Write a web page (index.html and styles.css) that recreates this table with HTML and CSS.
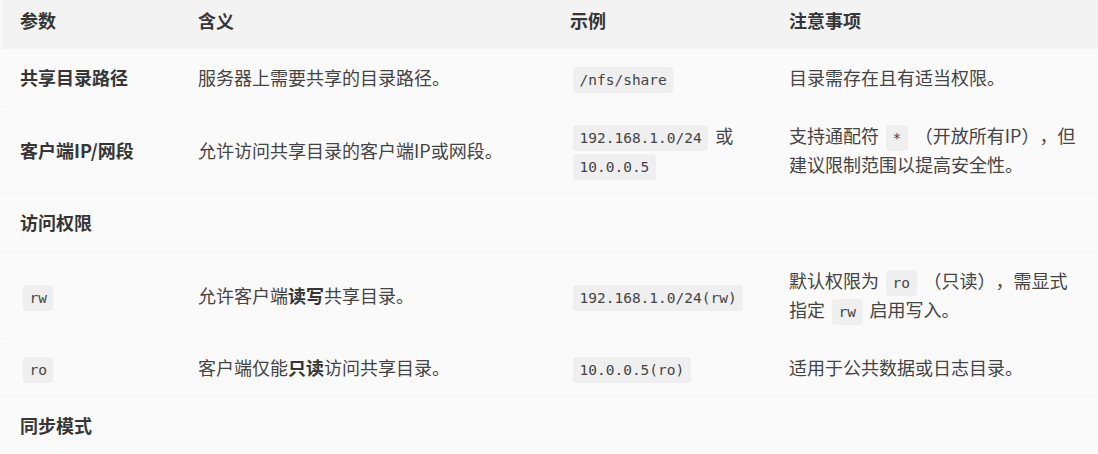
FILE: index.html
```html
<!DOCTYPE html>
<html lang="zh-CN">
<head>
<meta charset="utf-8">
<title>NFS 导出参数</title>
<link rel="stylesheet" href="styles.css">
</head>
<body>
<div class="viewport">
  <table class="params">
    <colgroup>
      <col class="c-param">
      <col class="c-desc">
      <col class="c-example">
      <col class="c-note">
    </colgroup>
    <thead>
      <tr>
        <th>参数</th>
        <th>含义</th>
        <th>示例</th>
        <th>注意事项</th>
      </tr>
    </thead>
    <tbody>
      <tr>
        <td class="name">共享目录路径</td>
        <td>服务器上需要共享的目录路径。</td>
        <td><code>/nfs/share</code></td>
        <td>目录需存在且有适当权限。</td>
      </tr>
      <tr>
        <td class="name">客户端IP/网段</td>
        <td>允许访问共享目录的客户端IP或网段。</td>
        <td><code>192.168.1.0/24</code> 或 <code>10.0.0.5</code></td>
        <td>支持通配符 <code>*</code> （开放所有IP），但建议限制范围以提高安全性。</td>
      </tr>
      <tr>
        <td class="name">访问权限</td>
        <td></td>
        <td></td>
        <td></td>
      </tr>
      <tr>
        <td><code>rw</code></td>
        <td>允许客户端<strong>读写</strong>共享目录。</td>
        <td><code>192.168.1.0/24(rw)</code></td>
        <td>默认权限为 <code>ro</code> （只读），需显式指定 <code>rw</code> 启用写入。</td>
      </tr>
      <tr>
        <td><code>ro</code></td>
        <td>客户端仅能<strong>只读</strong>访问共享目录。</td>
        <td><code>10.0.0.5(ro)</code></td>
        <td>适用于公共数据或日志目录。</td>
      </tr>
      <tr>
        <td class="name">同步模式</td>
        <td></td>
        <td></td>
        <td></td>
      </tr>
    </tbody>
  </table>
</div>
</body>
</html>
```

FILE: styles.css
```css
html, body {
  margin: 0;
  padding: 0;
  background: #fafafa;
}

body {
  font-family: "Noto Sans CJK SC", "Noto Sans", sans-serif;
  font-size: 18px;
  color: #444444;
  text-spacing-trim: space-all;
}

.viewport {
  width: 1098px;
  height: 454px;
  overflow: hidden;
}

.params {
  margin: -8px 0 0 2px;
  width: 1096px;
  table-layout: fixed;
  border-collapse: collapse;
  line-height: 29px;
}

.c-param { width: 178px; }
.c-desc { width: 372px; }
.c-example { width: 219px; }
.c-note { width: 327px; }

.params th,
.params td {
  padding: 14px 18px;
  text-align: left;
  vertical-align: middle;
}

.params th {
  background: #f3f3f3;
  font-weight: 700;
  color: #363636;
}

.params tbody tr {
  border-bottom: 1px solid #f3f3f3;
}

.params td.name,
.params strong {
  font-weight: 700;
  color: #363636;
}

.params code {
  font-family: "DejaVu Sans Mono", "Liberation Mono", monospace;
  font-size: 14.5px;
  line-height: 1;
  color: #444444;
  background: #efefef;
  border-radius: 4px;
  padding: 5px 6.5px;
  margin: 0 3px;
}
```
